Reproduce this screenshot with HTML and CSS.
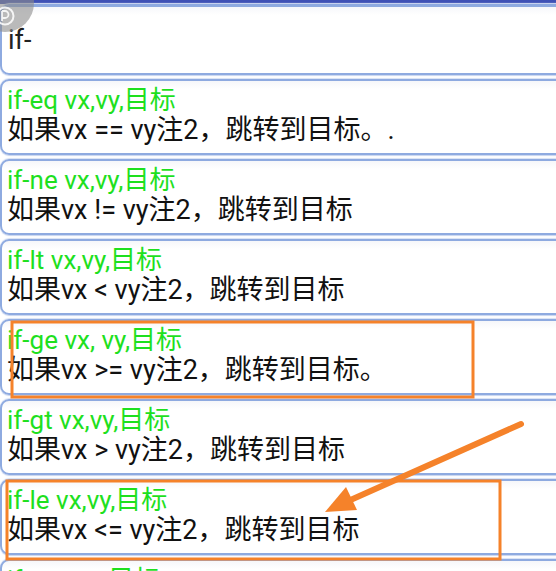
FILE: index.html
```html
<!DOCTYPE html>
<html lang="zh">

<head>
    <meta charset="UTF-8">
    <meta name="viewport" content="width=device-width, initial-scale=1.0">
    <title>if-</title>
    <link rel="stylesheet" href="styles.css">
</head>

<body>
    <div class="topbar"></div>

    <div class="list">
        <div class="card search">if-</div>

        <div class="card">
            <div class="op">if-eq vx,vy,目标</div>
            <div class="desc">如果vx == vy注2，跳转到目标。.</div>
        </div>

        <div class="card">
            <div class="op">if-ne vx,vy,目标</div>
            <div class="desc">如果vx != vy注2，跳转到目标</div>
        </div>

        <div class="card">
            <div class="op">if-lt vx,vy,目标</div>
            <div class="desc">如果vx &lt; vy注2，跳转到目标</div>
        </div>

        <div class="card">
            <div class="op">if-ge vx, vy,目标</div>
            <div class="desc">如果vx &gt;= vy注2，跳转到目标。</div>
        </div>

        <div class="card">
            <div class="op">if-gt vx,vy,目标</div>
            <div class="desc">如果vx &gt; vy注2，跳转到目标</div>
        </div>

        <div class="card">
            <div class="op">if-le vx,vy,目标</div>
            <div class="desc">如果vx &lt;= vy注2，跳转到目标</div>
        </div>

        <div class="card">
            <div class="op">if-eqz vx,目标</div>
            <div class="desc">如果vx == 0，跳转到目标</div>
        </div>
    </div>

    <!-- floating assistive button, half off screen -->
    <div class="float-btn">
        <svg width="22" height="22" viewBox="0 0 22 22">
            <circle cx="11" cy="11" r="8.5" fill="none" stroke="#fff" stroke-width="2" opacity=".85" />
            <path d="M8 6v10M8 6h3a3.5 3.5 0 0 1 0 7H8" fill="none" stroke="#fff" stroke-width="1.8" opacity=".85" />
        </svg>
    </div>

    <!-- orange annotations drawn on top of the screenshot -->
    <svg class="marks" width="556" height="571" viewBox="0 0 556 571">
        <rect x="12" y="322" width="461" height="75" fill="none" stroke="#f5822a" stroke-width="3" />
        <rect x="7" y="481" width="493" height="78" fill="none" stroke="#f5822a" stroke-width="3" />
        <line x1="521" y1="424" x2="346" y2="502" stroke="#f5822a" stroke-width="6" stroke-linecap="round" />
        <polygon points="325,512 346,487 357,510" fill="#f5822a" />
    </svg>
</body>

</html>
```

FILE: styles.css
```css
html,
body {
    margin: 0;
    padding: 0;
    background: #fff;
    overflow: hidden;
    font-family: Roboto, "Noto Sans CJK SC", sans-serif;
}

body {
    position: relative;
    width: 556px;
    height: 571px;
}

.topbar {
    height: 4px;
    background: #3f51b5;
}

.list {
    display: flex;
    flex-direction: column;
    gap: 4px;
    margin-right: -30px;
}

.card {
    box-sizing: border-box;
    flex: none;
    height: 76px;
    border: 2px solid #8eaae0;
    border-radius: 9px;
    padding: 4px 0 0 5px;
    box-shadow: 0 1px 1px #c5d3ef, 0 -1px 1px #d6e0f4;
    background: linear-gradient(#f6f7fa, #fff 8px);
}

.card.search {
    height: 71px;
    padding: 0 0 0 6px;
    display: flex;
    align-items: center;
    font-size: 27px;
    color: #222;
    border-top-width: 3px;
}

.op,
.desc {
    line-height: 30px;
    white-space: nowrap;
}

.op {
    font-size: 26px;
    color: #1ee01e;
}

.desc {
    font-size: 27px;
    color: #111;
}

.float-btn {
    position: absolute;
    left: -24px;
    top: -26px;
    width: 58px;
    height: 58px;
    border-radius: 50%;
    background: rgba(140, 140, 140, .6);
    display: flex;
    align-items: flex-end;
    justify-content: flex-end;
    padding: 0 18px 5px 0;
    box-sizing: border-box;
}

.marks {
    position: absolute;
    left: 0;
    top: 0;
}
```
